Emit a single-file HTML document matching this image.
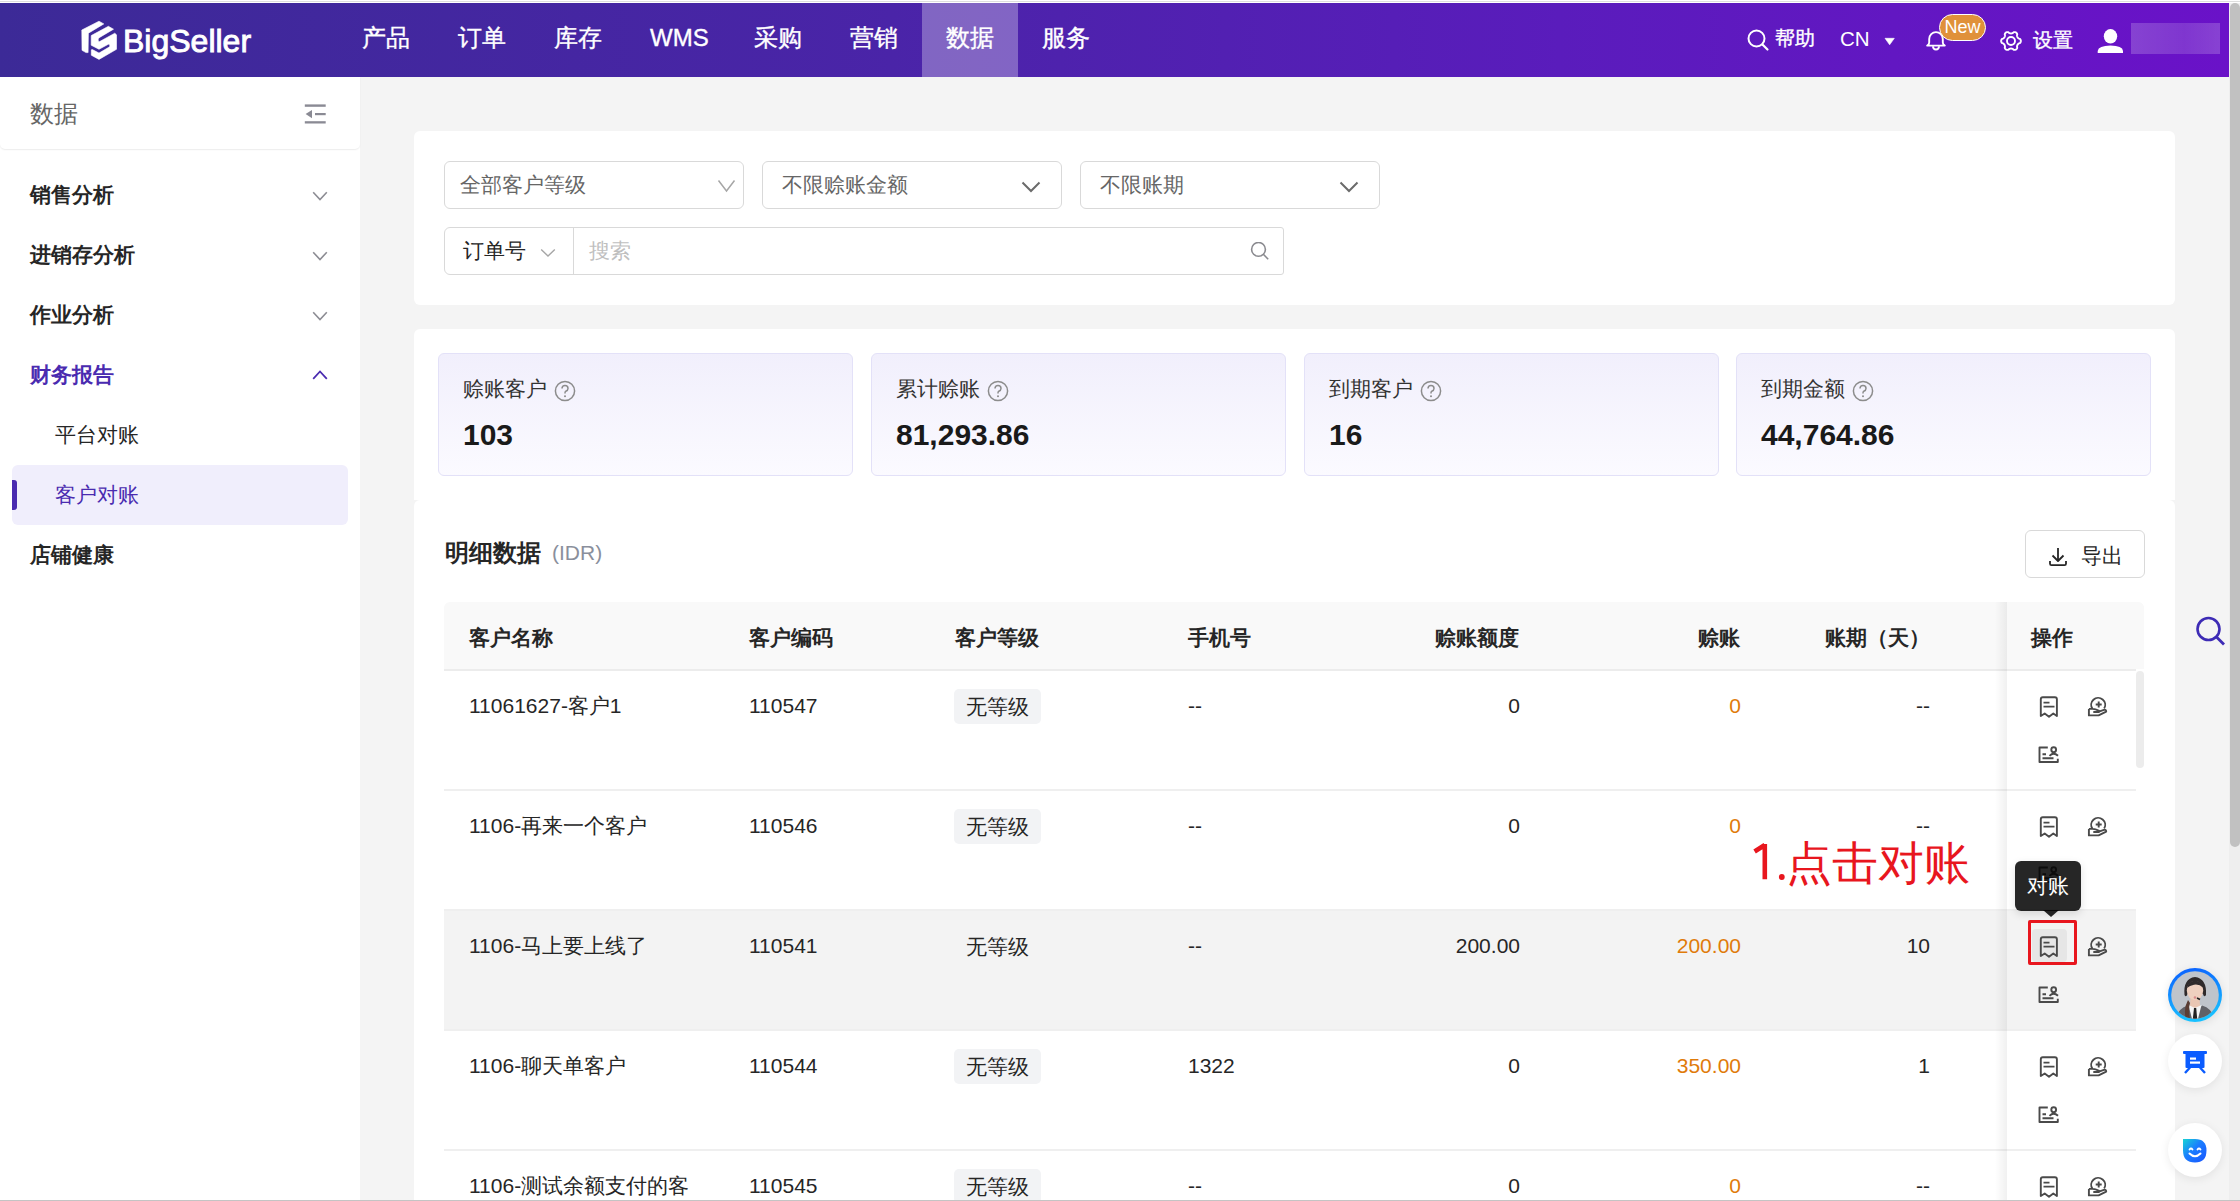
<!DOCTYPE html>
<html><head><meta charset="utf-8">
<style>
*{box-sizing:border-box;margin:0;padding:0}
html,body{width:2240px;height:1201px;overflow:hidden;background:#f4f4f4;font-family:"Liberation Sans",sans-serif;color:#262626}
.a{position:absolute}
#top{left:0;top:0;width:2240px;height:3px;background:#fff;border-top:1px solid #fff;border-bottom:1px solid #fff;background-clip:padding-box;box-shadow:inset 0 0 0 10px #dedede}
#hdr{left:0;top:3px;width:2229px;height:74px;background:linear-gradient(90deg,#3c2a97 0%,#4a24a8 40%,#5a1cbc 70%,#6a12c8 100%)}
.nav{top:0;height:74px;line-height:70px;font-size:24px;color:#fff;padding:0 24px;-webkit-text-stroke:0.35px #fff}
.nav.on{background:rgba(255,255,255,.3)}
#side{left:0;top:77px;width:360px;height:1123px;background:#fff}
.mi{left:30px;font-size:21px;font-weight:bold;color:#262626;line-height:24px}
.chev{width:16px;height:10px}
#card1{left:414px;top:131px;width:1761px;height:174px;background:#fff;border-radius:6px}
#card2{left:414px;top:329px;width:1761px;height:171px;background:#fff;border-radius:6px 6px 0 0}
#card3{left:414px;top:500px;width:1761px;height:760px;background:#fff;border-radius:6px}
.sl{left:15px;top:11px;font-size:21px;line-height:24px}
.sel{height:48px;border:1px solid #d9d9d9;border-radius:6px;background:#fff}
.stat{top:353px;height:123px;width:415px;border:1.5px solid #e3e1f8;border-radius:6px;background:linear-gradient(180deg,#f1effc 0%,#fbfaff 100%)}
.st-l{font-size:21px;color:#333;line-height:24px}
.st-v{font-size:30px;font-weight:bold;color:#1a1a1a;line-height:36px}
.th{font-size:21px;line-height:24px;font-weight:bold;color:#262626}
.td{font-size:21px;color:#262626;line-height:24px}
.tag{background:#f2f3f5;border-radius:5px;height:35px;width:87px;text-align:center;line-height:35px;font-size:21px;color:#262626}
.ic path,.ic circle{fill:none;stroke:#4a4a4a;stroke-width:1.9;stroke-linejoin:round}
.org{color:#e07b0a}
.rl{height:2px;background:#efefef}
</style></head><body>
<div class="a" id="top"></div>
<div class="a" id="hdr">
  <svg class="a" style="left:0;top:-3px" width="260" height="77" viewBox="0 0 260 77">
    <g fill="#fff" stroke="#fff" stroke-width="0.6" stroke-linejoin="round">
      <path d="M81.8,30 L99,21.2 L103.8,23.9 L88.4,33.2 L88.1,52.6 L86,52.6 L82,50.3 Z"/>
      <path d="M91.2,35.6 L108.4,26.3 L113.5,29.2 L98.8,37.9 Q97.2,40.2 99.2,41.8 L114.8,33.2 L116.5,34.8 L116.5,49.3 L99,59.4 L91.3,55.2 L91.3,49.8 L92.4,49.6 L99,53.1 L109.6,46.8 Q110.6,44.3 108.4,44.2 L99,49.3 L91.2,45.2 Z"/>
    </g>
  </svg>
  <div class="a" style="left:123px;top:18px;font-size:32px;line-height:40px;color:#fff;-webkit-text-stroke:0.9px #fff;letter-spacing:0px">BigSeller</div>
  <svg class="a" style="left:1745px;top:24px" width="26" height="26" viewBox="0 0 26 26"><circle cx="11.5" cy="11.5" r="8" fill="none" stroke="#fff" stroke-width="2"/><path d="M17.5,17.5 L22.5,22.5" stroke="#fff" stroke-width="2.2" stroke-linecap="round"/></svg>
  <div class="a" style="left:1775px;top:23px;font-size:20px;line-height:24px;color:#fff;-webkit-text-stroke:0.35px #fff">帮助</div>
  <div class="a" style="left:1840px;top:24px;font-size:20.5px;line-height:24px;color:#fff">CN</div>
  <svg class="a" style="left:1884px;top:34px" width="12" height="10"><path d="M1,1.3 L10.3,1.3 L5.65,7.8 Z" fill="#fff" stroke="#fff" stroke-width="0.6" stroke-linejoin="round"/></svg>
  <svg class="a" style="left:1922px;top:22.5px" width="28" height="30" viewBox="0 0 28 30"><path d="M5.2,19.6 L22.8,19.6 Q20.8,18.6 20.8,16.5 L20.8,12.9 A6.8,6.8 0 0 0 7.2,12.9 L7.2,16.5 Q7.2,18.6 5.2,19.6 Z" fill="none" stroke="#fff" stroke-width="1.9" stroke-linejoin="round"/><path d="M11,20.3 A3,3.2 0 0 0 17,20.3" fill="none" stroke="#fff" stroke-width="1.9"/></svg>
  <div class="a" style="left:1939px;top:11px;width:47px;height:27px;border-radius:14px;background:#e0913a;border:1.5px solid #fff;color:#fff;font-size:18px;line-height:24px;text-align:center">New</div>
  <svg class="a" style="left:1998px;top:24.8px" width="26" height="26" viewBox="0 0 26 26"><path d="M22.85,13.00 L22.83,13.34 L22.77,13.68 L22.66,14.02 L22.51,14.34 L22.32,14.64 L22.07,14.93 L21.73,15.18 L21.08,15.32 L20.73,15.51 L20.46,15.72 L20.23,15.92 L20.02,16.13 L19.84,16.34 L19.68,16.55 L19.54,16.77 L19.42,17.01 L19.31,17.26 L19.22,17.52 L19.14,17.80 L19.08,18.10 L19.04,18.44 L19.04,18.84 L19.25,19.47 L19.20,19.89 L19.08,20.25 L18.91,20.57 L18.71,20.86 L18.47,21.12 L18.21,21.34 L17.93,21.53 L17.62,21.68 L17.29,21.80 L16.95,21.87 L16.60,21.90 L16.24,21.89 L15.86,21.81 L15.48,21.65 L15.03,21.15 L14.69,20.95 L14.38,20.82 L14.09,20.72 L13.80,20.65 L13.53,20.59 L13.26,20.56 L13.00,20.55 L12.74,20.56 L12.47,20.59 L12.20,20.65 L11.91,20.72 L11.62,20.82 L11.31,20.95 L10.97,21.15 L10.52,21.65 L10.14,21.81 L9.76,21.89 L9.40,21.90 L9.05,21.87 L8.71,21.80 L8.38,21.68 L8.08,21.53 L7.79,21.34 L7.53,21.12 L7.29,20.86 L7.09,20.57 L6.92,20.25 L6.80,19.89 L6.75,19.47 L6.96,18.84 L6.96,18.44 L6.92,18.10 L6.86,17.80 L6.78,17.52 L6.69,17.26 L6.58,17.01 L6.46,16.77 L6.32,16.55 L6.16,16.34 L5.98,16.13 L5.77,15.92 L5.54,15.72 L5.27,15.51 L4.92,15.32 L4.27,15.18 L3.93,14.93 L3.68,14.64 L3.49,14.34 L3.34,14.02 L3.23,13.68 L3.17,13.34 L3.15,13.00 L3.17,12.66 L3.23,12.32 L3.34,11.98 L3.49,11.66 L3.68,11.36 L3.93,11.07 L4.27,10.82 L4.92,10.68 L5.27,10.49 L5.54,10.28 L5.77,10.08 L5.98,9.87 L6.16,9.66 L6.32,9.45 L6.46,9.22 L6.58,8.99 L6.69,8.74 L6.78,8.48 L6.86,8.20 L6.92,7.90 L6.96,7.56 L6.96,7.16 L6.75,6.53 L6.80,6.11 L6.92,5.75 L7.09,5.43 L7.29,5.14 L7.53,4.88 L7.79,4.66 L8.07,4.47 L8.38,4.32 L8.71,4.20 L9.05,4.13 L9.40,4.10 L9.76,4.11 L10.14,4.19 L10.52,4.35 L10.97,4.85 L11.31,5.05 L11.62,5.18 L11.91,5.28 L12.20,5.35 L12.47,5.41 L12.74,5.44 L13.00,5.45 L13.26,5.44 L13.53,5.41 L13.80,5.35 L14.09,5.28 L14.38,5.18 L14.69,5.05 L15.03,4.85 L15.48,4.35 L15.86,4.19 L16.24,4.11 L16.60,4.10 L16.95,4.13 L17.29,4.20 L17.62,4.32 L17.93,4.47 L18.21,4.66 L18.47,4.88 L18.71,5.14 L18.91,5.43 L19.08,5.75 L19.20,6.11 L19.25,6.53 L19.04,7.16 L19.04,7.56 L19.08,7.90 L19.14,8.20 L19.22,8.48 L19.31,8.74 L19.42,8.99 L19.54,9.22 L19.68,9.45 L19.84,9.66 L20.02,9.87 L20.23,10.08 L20.46,10.28 L20.73,10.49 L21.08,10.68 L21.73,10.82 L22.07,11.07 L22.32,11.36 L22.51,11.66 L22.66,11.98 L22.77,12.32 L22.83,12.66 Z" fill="none" stroke="#fff" stroke-width="1.9" stroke-linejoin="round"/><circle cx="13" cy="13" r="4" fill="none" stroke="#fff" stroke-width="1.9"/></svg>
  <div class="a" style="left:2033px;top:25px;font-size:20px;line-height:24px;color:#fff;-webkit-text-stroke:0.35px #fff">设置</div>
  <svg class="a" style="left:2096px;top:22px" width="30" height="30" viewBox="0 0 30 30"><ellipse cx="14.5" cy="11.3" rx="6.7" ry="7.3" fill="#fff"/><path d="M1.7,28 L1.7,26 Q2.5,20.8 14.5,20.6 Q26.5,20.8 27,26 L27,28 Z" fill="#fff"/></svg>
  <div class="a" style="left:2131px;top:20px;width:89px;height:31px;background:linear-gradient(90deg,rgba(255,255,255,.2),rgba(255,255,255,.15) 60%,rgba(255,255,255,.2))"></div>
  <div class="a nav" style="left:338px">产品</div>
  <div class="a nav" style="left:434px">订单</div>
  <div class="a nav" style="left:530px">库存</div>
  <div class="a nav" style="left:626px">WMS</div>
  <div class="a nav" style="left:730px">采购</div>
  <div class="a nav" style="left:826px">营销</div>
  <div class="a nav on" style="left:922px">数据</div>
  <div class="a nav" style="left:1018px">服务</div>
</div>
<div class="a" id="side">
  <div class="a" style="left:0;top:0;width:360px;height:72px;border-radius:0 0 5px 5px;box-shadow:0 1px 1.5px rgba(0,0,0,.08)"></div>
  <div class="a" style="left:30px;top:23px;font-size:24px;line-height:28px;color:#666">数据</div>
  <svg class="a" style="left:303px;top:26px" width="25" height="24" viewBox="0 0 25 24"><rect x="1.8" y="1.4" width="20.9" height="2.4" fill="#8a8a94"/><rect x="12" y="10" width="10.7" height="2.2" fill="#8a8a94"/><rect x="1.8" y="18.2" width="20.9" height="2.3" fill="#8a8a94"/><path d="M2.6,11.1 L9,7 L9,15.2 Z" fill="#8a8a94"/></svg>
  <div class="a mi" style="top:106px">销售分析</div>
  <div class="a mi" style="top:166px">进销存分析</div>
  <div class="a mi" style="top:226px">作业分析</div>
  <div class="a mi" style="top:286px;color:#4a2bb0">财务报告</div>
  <div class="a" style="left:12px;top:388px;width:336px;height:60px;background:#f0eefc;border-radius:6px"></div>
  <div class="a" style="left:12px;top:403px;width:5px;height:30px;background:#4a2bb0;border-radius:0 3px 3px 0"></div>
  <div class="a mi" style="left:55px;top:346px;font-weight:normal">平台对账</div>
  <div class="a mi" style="left:55px;top:406px;font-weight:normal;color:#4a2bb0">客户对账</div>
  <div class="a mi" style="top:466px">店铺健康</div>
  <svg class="a chev" style="left:311.5px;top:114px" viewBox="0 0 16 10"><path d="M1.2,1.2 L8,8.5 L14.8,1.2" fill="none" stroke="#8c8c93" stroke-width="1.6"/></svg>
  <svg class="a chev" style="left:311.5px;top:174px" viewBox="0 0 16 10"><path d="M1.2,1.2 L8,8.5 L14.8,1.2" fill="none" stroke="#8c8c93" stroke-width="1.6"/></svg>
  <svg class="a chev" style="left:311.5px;top:234px" viewBox="0 0 16 10"><path d="M1.2,1.2 L8,8.5 L14.8,1.2" fill="none" stroke="#8c8c93" stroke-width="1.6"/></svg>
  <svg class="a chev" style="left:311.5px;top:293px" viewBox="0 0 16 10"><path d="M1.2,8.8 L8,1.5 L14.8,8.8" fill="none" stroke="#4a2bb0" stroke-width="1.8"/></svg>
</div>
<div class="a" id="card1">
  <div class="a sel" style="left:30px;top:30px;width:300px"><div class="a sl" style="color:#666">全部客户等级</div>
    <svg class="a" style="left:272px;top:17px" width="20" height="14" viewBox="0 0 20 14"><path d="M1.5,1.5 L9.5,12 L17.5,1.5" fill="none" stroke="#a6a6a6" stroke-width="1.5"/></svg></div>
  <div class="a sel" style="left:348px;top:30px;width:300px"><div class="a sl" style="left:19px;color:#666">不限赊账金额</div>
    <svg class="a" style="left:258px;top:19px" width="20" height="12" viewBox="0 0 20 12"><path d="M1.5,1.5 L10,10 L18.5,1.5" fill="none" stroke="#6b6b6b" stroke-width="2"/></svg></div>
  <div class="a sel" style="left:666px;top:30px;width:300px"><div class="a sl" style="left:19px;color:#666">不限账期</div>
    <svg class="a" style="left:258px;top:19px" width="20" height="12" viewBox="0 0 20 12"><path d="M1.5,1.5 L10,10 L18.5,1.5" fill="none" stroke="#6b6b6b" stroke-width="2"/></svg></div>
  <div class="a sel" style="left:30px;top:96px;width:840px;border-radius:6px 3px 3px 6px">
    <div class="a sl" style="left:18px;color:#262626">订单号</div>
    <svg class="a" style="left:95px;top:20px" width="16" height="10" viewBox="0 0 16 10"><path d="M1.2,1.5 L8,8 L14.8,1.5" fill="none" stroke="#a6a6a6" stroke-width="1.4"/></svg>
    <div class="a" style="left:128px;top:0;width:1px;height:46px;background:#d9d9d9"></div>
    <div class="a sl" style="left:144px;color:#bfbfbf">搜索</div>
    <svg class="a" style="left:805px;top:14px" width="20" height="20" viewBox="0 0 20 20"><circle cx="8.5" cy="7.4" r="6.9" fill="none" stroke="#8a8a8f" stroke-width="1.6"/><path d="M13.3,12.3 L18.2,17.2" stroke="#8a8a8f" stroke-width="1.6"/></svg>
  </div>
</div>
<div class="a" id="card2"></div><div class="a" id="card3"></div>
<div class="a stat" style="left:438px"></div>
<div class="a st-l" style="left:463px;top:377px">赊账客户</div>
<svg class="a" style="left:554px;top:380px" width="22" height="22" viewBox="0 0 22 22"><circle cx="11" cy="11" r="9.6" fill="none" stroke="#8c8c8c" stroke-width="1.5"/><path d="M8,8.6 Q8,5.6 11,5.6 Q14,5.6 14,8.4 Q14,10.2 11.8,11.2 Q11,11.6 11,13 L11,13.6" fill="none" stroke="#8c8c8c" stroke-width="1.5"/><circle cx="11" cy="16.3" r="1" fill="#8c8c8c"/></svg>
<div class="a st-v" style="left:463px;top:417px">103</div>
<div class="a stat" style="left:871px"></div>
<div class="a st-l" style="left:896px;top:377px">累计赊账</div>
<svg class="a" style="left:987px;top:380px" width="22" height="22" viewBox="0 0 22 22"><circle cx="11" cy="11" r="9.6" fill="none" stroke="#8c8c8c" stroke-width="1.5"/><path d="M8,8.6 Q8,5.6 11,5.6 Q14,5.6 14,8.4 Q14,10.2 11.8,11.2 Q11,11.6 11,13 L11,13.6" fill="none" stroke="#8c8c8c" stroke-width="1.5"/><circle cx="11" cy="16.3" r="1" fill="#8c8c8c"/></svg>
<div class="a st-v" style="left:896px;top:417px">81,293.86</div>
<div class="a stat" style="left:1304px"></div>
<div class="a st-l" style="left:1329px;top:377px">到期客户</div>
<svg class="a" style="left:1420px;top:380px" width="22" height="22" viewBox="0 0 22 22"><circle cx="11" cy="11" r="9.6" fill="none" stroke="#8c8c8c" stroke-width="1.5"/><path d="M8,8.6 Q8,5.6 11,5.6 Q14,5.6 14,8.4 Q14,10.2 11.8,11.2 Q11,11.6 11,13 L11,13.6" fill="none" stroke="#8c8c8c" stroke-width="1.5"/><circle cx="11" cy="16.3" r="1" fill="#8c8c8c"/></svg>
<div class="a st-v" style="left:1329px;top:417px">16</div>
<div class="a stat" style="left:1736px"></div>
<div class="a st-l" style="left:1761px;top:377px">到期金额</div>
<svg class="a" style="left:1852px;top:380px" width="22" height="22" viewBox="0 0 22 22"><circle cx="11" cy="11" r="9.6" fill="none" stroke="#8c8c8c" stroke-width="1.5"/><path d="M8,8.6 Q8,5.6 11,5.6 Q14,5.6 14,8.4 Q14,10.2 11.8,11.2 Q11,11.6 11,13 L11,13.6" fill="none" stroke="#8c8c8c" stroke-width="1.5"/><circle cx="11" cy="16.3" r="1" fill="#8c8c8c"/></svg>
<div class="a st-v" style="left:1761px;top:417px">44,764.86</div>
<div class="a" style="left:445px;top:538px;font-size:24px;font-weight:bold;line-height:30px;color:#262626">明细数据</div>
<div class="a" style="left:552px;top:539px;font-size:21px;line-height:28px;color:#8a8f9c">(IDR)</div>
<div class="a" style="left:2025px;top:530px;width:120px;height:48px;border:1px solid #d9d9d9;border-radius:6px;background:#fff"></div>
<svg class="a" style="left:2047px;top:546px" width="22" height="22" viewBox="0 0 22 22"><path d="M11,2 L11,15 M5.5,9.5 L11,15 L16.5,9.5" fill="none" stroke="#262626" stroke-width="1.8" stroke-linejoin="round"/><path d="M3,15 L3,17.7 Q3,19.2 4.5,19.2 L17.5,19.2 Q19,19.2 19,17.7 L19,15" fill="none" stroke="#262626" stroke-width="1.8"/></svg>
<div class="a" style="left:2081px;top:544px;font-size:21px;line-height:24px;color:#262626">导出</div>

<div class="a" style="left:2229px;top:3px;width:11px;height:1197px;background:#eeeeee"></div>
<div class="a" style="left:2230px;top:3px;width:10px;height:844px;background:#c1c1c1;border-radius:5px"></div>

<div class="a" style="left:444px;top:602px;width:1700px;height:67px;background:#f9f9f9;border-radius:6px 6px 0 0"></div>
<div class="a" style="left:444px;top:669px;width:1692px;height:2px;background:#ececec"></div>
<div class="a th" style="left:469px;top:626px">客户名称</div>
<div class="a th" style="left:749px;top:626px">客户编码</div>
<div class="a th" style="left:955px;top:626px">客户等级</div>
<div class="a th" style="left:1188px;top:626px">手机号</div>
<div class="a th" style="right:721px;top:626px">赊账额度</div>
<div class="a th" style="right:500px;top:626px">赊账</div>
<div class="a th" style="right:310px;top:626px">账期（天）</div>
<div class="a" style="left:444px;top:911px;width:1692px;height:118px;background:#f3f3f3"></div>
<div class="a td" style="left:469px;top:694px">11061627-客户1</div>
<div class="a td" style="left:749px;top:694px">110547</div>
<div class="a tag" style="left:954px;top:689px;">无等级</div>
<div class="a td" style="left:1188px;top:694px">--</div>
<div class="a td" style="right:720px;top:694px">0</div>
<div class="a td org" style="right:499px;top:694px">0</div>
<div class="a td" style="right:310px;top:694px">--</div>
<div class="a" style="left:444px;top:789px;width:1692px;height:2px;background:#efefef"></div>
<div class="a td" style="left:469px;top:814px">1106-再来一个客户</div>
<div class="a td" style="left:749px;top:814px">110546</div>
<div class="a tag" style="left:954px;top:809px;">无等级</div>
<div class="a td" style="left:1188px;top:814px">--</div>
<div class="a td" style="right:720px;top:814px">0</div>
<div class="a td org" style="right:499px;top:814px">0</div>
<div class="a td" style="right:310px;top:814px">--</div>
<div class="a" style="left:444px;top:909px;width:1692px;height:2px;background:#efefef"></div>
<div class="a td" style="left:469px;top:934px">1106-马上要上线了</div>
<div class="a td" style="left:749px;top:934px">110541</div>
<div class="a tag" style="left:954px;top:929px;background:transparent;">无等级</div>
<div class="a td" style="left:1188px;top:934px">--</div>
<div class="a td" style="right:720px;top:934px">200.00</div>
<div class="a td org" style="right:499px;top:934px">200.00</div>
<div class="a td" style="right:310px;top:934px">10</div>
<div class="a" style="left:444px;top:1029px;width:1692px;height:2px;background:#efefef"></div>
<div class="a td" style="left:469px;top:1054px">1106-聊天单客户</div>
<div class="a td" style="left:749px;top:1054px">110544</div>
<div class="a tag" style="left:954px;top:1049px;">无等级</div>
<div class="a td" style="left:1188px;top:1054px">1322</div>
<div class="a td" style="right:720px;top:1054px">0</div>
<div class="a td org" style="right:499px;top:1054px">350.00</div>
<div class="a td" style="right:310px;top:1054px">1</div>
<div class="a" style="left:444px;top:1149px;width:1692px;height:2px;background:#efefef"></div>
<div class="a td" style="left:469px;top:1174px">1106-测试余额支付的客</div>
<div class="a td" style="left:749px;top:1174px">110545</div>
<div class="a tag" style="left:954px;top:1169px;">无等级</div>
<div class="a td" style="left:1188px;top:1174px">--</div>
<div class="a td" style="right:720px;top:1174px">0</div>
<div class="a td org" style="right:499px;top:1174px">0</div>
<div class="a td" style="right:310px;top:1174px">--</div>
<div class="a" style="left:1995px;top:602px;width:12px;height:600px;background:linear-gradient(90deg,rgba(0,0,0,0),rgba(0,0,0,.06))"></div>
<div class="a" style="left:2007px;top:602px;width:137px;height:67px;background:#f9f9f9;border-radius:0 6px 0 0"></div>
<div class="a th" style="left:2031px;top:626px">操作</div>
<div class="a" style="left:2007px;top:671px;width:129px;height:530px;background:#fff"></div>
<div class="a" style="left:2007px;top:911px;width:129px;height:118px;background:#f3f3f3"></div>
<div class="a" style="left:2007px;top:789px;width:129px;height:2px;background:#efefef"></div>
<svg class="a ic" style="left:2037px;top:693px" width="24" height="26" viewBox="0 0 24 26"><path d="M3.8,23 L3.8,6.2 Q3.8,4.2 5.8,4.2 L17.9,4.2 Q19.9,4.2 19.9,6.2 L19.9,23 L16.3,20.5 L12,23.8 L7.7,20.5 Z M6.5,9.6 L12.5,9.6 M6.5,13.6 L17.5,13.6"/></svg>
<svg class="a ic" style="left:2087px;top:693px" width="24" height="26" viewBox="0 0 24 26"><path d="M5.49,15.9 A7,7 0 1 1 17.17,15.5 M8.7,11.5 L14.7,11.5 M11.7,8.5 L11.7,14.5 M1.9,15.9 L1.9,22.4 L11.6,22.4 L19.2,18.6 Q19.2,16.4 16.9,16.9 L12.6,18.4 M1.9,15.9 L5.8,15.9 Q8.4,16.2 11.6,17.6 Q13.3,18.6 11.8,19 L6.3,19"/></svg>
<svg class="a ic" style="left:2037px;top:744px" width="24" height="22" viewBox="0 0 24 22"><path d="M10.8,3.5 L2.5,3.5 L2.5,18 L20.8,18 L20.8,14.8 M5.5,10.3 L9,10.3 M5.5,14.3 L16.5,14.3 M12.5,11.8 Q16.7,7.6 21,11.8"/><circle cx="16.7" cy="5.7" r="2.4"/></svg>
<div class="a" style="left:2007px;top:909px;width:129px;height:2px;background:#efefef"></div>
<svg class="a ic" style="left:2037px;top:813px" width="24" height="26" viewBox="0 0 24 26"><path d="M3.8,23 L3.8,6.2 Q3.8,4.2 5.8,4.2 L17.9,4.2 Q19.9,4.2 19.9,6.2 L19.9,23 L16.3,20.5 L12,23.8 L7.7,20.5 Z M6.5,9.6 L12.5,9.6 M6.5,13.6 L17.5,13.6"/></svg>
<svg class="a ic" style="left:2087px;top:813px" width="24" height="26" viewBox="0 0 24 26"><path d="M5.49,15.9 A7,7 0 1 1 17.17,15.5 M8.7,11.5 L14.7,11.5 M11.7,8.5 L11.7,14.5 M1.9,15.9 L1.9,22.4 L11.6,22.4 L19.2,18.6 Q19.2,16.4 16.9,16.9 L12.6,18.4 M1.9,15.9 L5.8,15.9 Q8.4,16.2 11.6,17.6 Q13.3,18.6 11.8,19 L6.3,19"/></svg>
<svg class="a ic" style="left:2037px;top:864px" width="24" height="22" viewBox="0 0 24 22"><path d="M10.8,3.5 L2.5,3.5 L2.5,18 L20.8,18 L20.8,14.8 M5.5,10.3 L9,10.3 M5.5,14.3 L16.5,14.3 M12.5,11.8 Q16.7,7.6 21,11.8"/><circle cx="16.7" cy="5.7" r="2.4"/></svg>
<div class="a" style="left:2007px;top:1029px;width:129px;height:2px;background:#efefef"></div>
<svg class="a ic" style="left:2037px;top:933px" width="24" height="26" viewBox="0 0 24 26"><path d="M3.8,23 L3.8,6.2 Q3.8,4.2 5.8,4.2 L17.9,4.2 Q19.9,4.2 19.9,6.2 L19.9,23 L16.3,20.5 L12,23.8 L7.7,20.5 Z M6.5,9.6 L12.5,9.6 M6.5,13.6 L17.5,13.6"/></svg>
<svg class="a ic" style="left:2087px;top:933px" width="24" height="26" viewBox="0 0 24 26"><path d="M5.49,15.9 A7,7 0 1 1 17.17,15.5 M8.7,11.5 L14.7,11.5 M11.7,8.5 L11.7,14.5 M1.9,15.9 L1.9,22.4 L11.6,22.4 L19.2,18.6 Q19.2,16.4 16.9,16.9 L12.6,18.4 M1.9,15.9 L5.8,15.9 Q8.4,16.2 11.6,17.6 Q13.3,18.6 11.8,19 L6.3,19"/></svg>
<svg class="a ic" style="left:2037px;top:984px" width="24" height="22" viewBox="0 0 24 22"><path d="M10.8,3.5 L2.5,3.5 L2.5,18 L20.8,18 L20.8,14.8 M5.5,10.3 L9,10.3 M5.5,14.3 L16.5,14.3 M12.5,11.8 Q16.7,7.6 21,11.8"/><circle cx="16.7" cy="5.7" r="2.4"/></svg>
<div class="a" style="left:2007px;top:1149px;width:129px;height:2px;background:#efefef"></div>
<svg class="a ic" style="left:2037px;top:1053px" width="24" height="26" viewBox="0 0 24 26"><path d="M3.8,23 L3.8,6.2 Q3.8,4.2 5.8,4.2 L17.9,4.2 Q19.9,4.2 19.9,6.2 L19.9,23 L16.3,20.5 L12,23.8 L7.7,20.5 Z M6.5,9.6 L12.5,9.6 M6.5,13.6 L17.5,13.6"/></svg>
<svg class="a ic" style="left:2087px;top:1053px" width="24" height="26" viewBox="0 0 24 26"><path d="M5.49,15.9 A7,7 0 1 1 17.17,15.5 M8.7,11.5 L14.7,11.5 M11.7,8.5 L11.7,14.5 M1.9,15.9 L1.9,22.4 L11.6,22.4 L19.2,18.6 Q19.2,16.4 16.9,16.9 L12.6,18.4 M1.9,15.9 L5.8,15.9 Q8.4,16.2 11.6,17.6 Q13.3,18.6 11.8,19 L6.3,19"/></svg>
<svg class="a ic" style="left:2037px;top:1104px" width="24" height="22" viewBox="0 0 24 22"><path d="M10.8,3.5 L2.5,3.5 L2.5,18 L20.8,18 L20.8,14.8 M5.5,10.3 L9,10.3 M5.5,14.3 L16.5,14.3 M12.5,11.8 Q16.7,7.6 21,11.8"/><circle cx="16.7" cy="5.7" r="2.4"/></svg>
<svg class="a ic" style="left:2037px;top:1173px" width="24" height="26" viewBox="0 0 24 26"><path d="M3.8,23 L3.8,6.2 Q3.8,4.2 5.8,4.2 L17.9,4.2 Q19.9,4.2 19.9,6.2 L19.9,23 L16.3,20.5 L12,23.8 L7.7,20.5 Z M6.5,9.6 L12.5,9.6 M6.5,13.6 L17.5,13.6"/></svg>
<svg class="a ic" style="left:2087px;top:1173px" width="24" height="26" viewBox="0 0 24 26"><path d="M5.49,15.9 A7,7 0 1 1 17.17,15.5 M8.7,11.5 L14.7,11.5 M11.7,8.5 L11.7,14.5 M1.9,15.9 L1.9,22.4 L11.6,22.4 L19.2,18.6 Q19.2,16.4 16.9,16.9 L12.6,18.4 M1.9,15.9 L5.8,15.9 Q8.4,16.2 11.6,17.6 Q13.3,18.6 11.8,19 L6.3,19"/></svg>
<svg class="a ic" style="left:2037px;top:1224px" width="24" height="22" viewBox="0 0 24 22"><path d="M10.8,3.5 L2.5,3.5 L2.5,18 L20.8,18 L20.8,14.8 M5.5,10.3 L9,10.3 M5.5,14.3 L16.5,14.3 M12.5,11.8 Q16.7,7.6 21,11.8"/><circle cx="16.7" cy="5.7" r="2.4"/></svg>
<div class="a" style="left:2136px;top:671px;width:8px;height:97px;background:#ececec;border-radius:4px"></div>
<div class="a" style="left:2032px;top:929px;width:35px;height:33px;background:#e6e6e6;border-radius:4px"></div>
<svg class="a ic" style="left:2037px;top:933px" width="24" height="26" viewBox="0 0 24 26"><path d="M3.8,23 L3.8,6.2 Q3.8,4.2 5.8,4.2 L17.9,4.2 Q19.9,4.2 19.9,6.2 L19.9,23 L16.3,20.5 L12,23.8 L7.7,20.5 Z M6.5,9.6 L12.5,9.6 M6.5,13.6 L17.5,13.6"/></svg>
<div class="a" style="left:2028px;top:920px;width:49px;height:45px;border:3px solid #e8161e;border-radius:2px"></div>
<div class="a" style="left:2015px;top:861px;width:66px;height:50px;background:rgba(0,0,0,.85);border-radius:6px;box-shadow:0 3px 8px rgba(0,0,0,.12)"></div>
<svg class="a" style="left:2043px;top:910px" width="16" height="8"><path d="M0,0 L16,0 L8,7 Z" fill="rgba(0,0,0,.85)"/></svg>
<div class="a" style="left:2027px;top:874px;font-size:21px;line-height:24px;color:#fff">对账</div>
<svg class="a" style="left:1750px;top:840px" width="40" height="44" viewBox="0 0 40 44"><path d="M14.8,4 L14.8,39.3 M4.6,11.5 L14.8,5" fill="none" stroke="#e8161e" stroke-width="4.6"/><circle cx="31.8" cy="37" r="2.9" fill="#e8161e"/></svg><div class="a" style="left:1786px;top:835px;font-size:46px;line-height:56px;color:#e8161e">点击对账</div>
<svg class="a" style="left:2190px;top:610px" width="40" height="40" viewBox="0 0 40 40"><circle cx="18.5" cy="19" r="11" fill="none" stroke="#3d2bb5" stroke-width="2.6"/><path d="M26.5,27 L34,34.5" stroke="#3d2bb5" stroke-width="2.8"/></svg>
<div class="a" style="left:2168px;top:1034px;width:54px;height:54px;border-radius:50%;background:#fff;box-shadow:0 2px 10px rgba(0,0,0,.08)"></div>
<svg class="a" style="left:2181px;top:1048px" width="28" height="28" viewBox="0 0 28 28"><rect x="2" y="3" width="24" height="3" rx="1" fill="#0a5cff"/><rect x="4.5" y="5" width="19" height="15" rx="1" fill="#0a5cff"/><rect x="9" y="9.5" width="6" height="2.2" fill="#fff"/><rect x="9" y="13.5" width="10" height="2.2" fill="#fff"/><path d="M9,19.5 L4,25 M19,19.5 L24,25" stroke="#0a5cff" stroke-width="2.4"/></svg>
<div class="a" style="left:2168px;top:1123px;width:54px;height:54px;border-radius:50%;background:#fff;box-shadow:0 2px 10px rgba(0,0,0,.08)"></div>
<svg class="a" style="left:2181px;top:1137px" width="28" height="28" viewBox="0 0 28 28"><defs><linearGradient id="sg" x1="0" y1="0" x2="1" y2="1"><stop offset="0" stop-color="#17d4d4"/><stop offset=".45" stop-color="#1a7dff"/><stop offset="1" stop-color="#1a55ff"/></linearGradient></defs><path d="M2,2 L14,2 Q25.5,2 25.5,13.5 Q25.5,25.5 14,25.5 Q2,25.5 2,13.5 Z" fill="url(#sg)"/><path d="M8.5,12.5 Q10,10.5 11.5,12.5 M16.5,12.5 Q18,10.5 19.5,12.5" stroke="#fff" stroke-width="1.8" fill="none" stroke-linecap="round"/><path d="M8.5,16.5 Q14,22 19.5,16.5" stroke="#fff" stroke-width="2" fill="none" stroke-linecap="round"/></svg>
<div class="a" style="left:2168px;top:968px;width:54px;height:54px;border-radius:50%;box-shadow:0 2px 10px rgba(0,0,0,.1)"></div><svg class="a" style="left:2167px;top:967px" width="56" height="56" viewBox="0 0 56 56"><defs><clipPath id="av"><circle cx="28" cy="28" r="23.8"/></clipPath><linearGradient id="rg" x1="0" y1="0" x2="0.2" y2="1"><stop offset="0" stop-color="#0a5cff"/><stop offset="1" stop-color="#18c0ff"/></linearGradient></defs><circle cx="28" cy="28" r="27" fill="url(#rg)"/><g clip-path="url(#av)"><rect x="0" y="0" width="56" height="56" fill="#bfc4cb"/><path d="M17.5,28 Q16,11.5 28,10 Q40,11.5 39,28 Q37,31 36,27 L20.5,27 Q19,31 17.5,28 Z" fill="#2f2a2b"/><path d="M23.5,29 L32.5,29 L33,40 L28,44 L23,40 Z" fill="#e9c6b3"/><ellipse cx="28" cy="23.5" rx="8.2" ry="9.5" fill="#efd0bf"/><path d="M20,21 Q21,14 28,13.8 Q35,14 36.5,21 Q32,16.8 27,17.8 Q22.5,18.5 20,21 Z" fill="#2f2a2b"/><path d="M8,56 Q9,42 21,38.5 L28,46 L35,38.5 Q47,42 48,56 Z" fill="#606167"/><path d="M21.5,38 L25,52 L31,52 L34.5,38 L28,41 Z" fill="#f4f4f4"/><path d="M27,41 L29.2,41 L30.2,52 L25.8,52 Z" fill="#222"/><path d="M21,33 Q16,42 19,52 L23,52 Q21,42 23,36 Z" fill="#5a3d33"/><path d="M30,31 L33,32.5" stroke="#222" stroke-width="1.6"/><circle cx="28" cy="30.5" r="1.3" fill="#d98a8a"/></g></svg>
<div class="a" style="left:0;top:1200px;width:2240px;height:1px;background:#c4c4c4"></div>
</body></html>
